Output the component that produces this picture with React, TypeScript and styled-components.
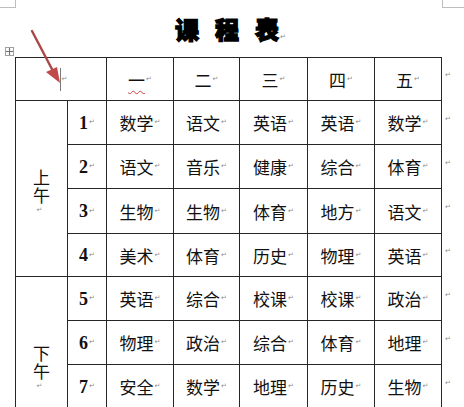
import React from "react";
import styled, { createGlobalStyle } from "styled-components";

const GlobalStyle = createGlobalStyle`
  html, body { margin: 0; padding: 0; background: #fff; overflow: hidden; }
  body { font-family: "Noto Sans CJK SC", sans-serif; color: #111; }
`;

const Page = styled.div`
  position: relative;
  width: 464px;
  height: 407px;
  overflow: hidden;
  display: flex;
  flex-direction: column;
  padding-left: 15px;
  box-sizing: border-box;
`;

const Title = styled.div`
  flex-shrink: 0;
  width: 427px;
  height: 57px;
  display: flex;
  align-items: center;
  justify-content: center;
  gap: 16px;
  padding-left: 4px;
  box-sizing: border-box;
  font-family: "Noto Sans CJK SC", sans-serif;
  font-weight: 900;
  font-size: 24px;
  line-height: 1;
  color: #000;
  -webkit-text-stroke: 1.3px #000;
`;

const TitleChar = styled.span`
  display: inline-flex;
  align-items: baseline;
`;

const Mark = styled.span<{ $size?: number }>`
  font-family: "DejaVu Sans", sans-serif;
  font-weight: normal;
  font-size: ${(p) => p.$size ?? 7}px;
  color: #8c8c8c;
  margin-left: 1px;
  line-height: 1;
  -webkit-text-stroke: 0;
`;

const Body = styled.div`
  flex-shrink: 0;
  display: flex;
  align-items: flex-start;
`;

const ROWS = "42px 43px 43px 44px 42px 43px 43px 43px 43px";

const Grid = styled.div`
  display: grid;
  grid-template-columns: 51px 38px 66px 65px 67px 66px 66px;
  grid-template-rows: ${ROWS};
  gap: 1px;
  padding: 1px;
  background: #262626;
`;

const Cell = styled.div<{ $span?: number; $rowStart?: number; $rowSpan?: number }>`
  background: #fff;
  display: flex;
  align-items: center;
  justify-content: center;
  font-size: 17px;
  line-height: 1;
  color: #111;
  white-space: nowrap;
  ${(p) => (p.$span ? `grid-column: span ${p.$span};` : "")}
  ${(p) =>
    p.$rowStart ? `grid-column: 1; grid-row: ${p.$rowStart} / span ${p.$rowSpan};` : ""}
`;

const Num = styled.span`
  font-family: "Liberation Serif", serif;
  font-weight: bold;
  font-size: 18px;
`;

const Wavy = styled.span`
  text-decoration: underline wavy #d04040;
  text-decoration-thickness: 1px;
  text-underline-offset: 3px;
`;

const Stack = styled.div`
  display: flex;
  flex-direction: column;
  align-items: center;
  font-size: 17px;
  line-height: 18px;
  padding-top: 6px;
`;

const SmallMarkLine = styled.span`
  font-family: "DejaVu Sans", sans-serif;
  font-size: 7px;
  line-height: 9px;
  color: #8c8c8c;
  margin-right: 4px;
  margin-top: 2px;
`;

const Cursor = styled.span`
  display: inline-block;
  width: 1px;
  height: 23px;
  background: #7a7a7a;
  margin-left: 5px;
`;

const EndMarks = styled.div`
  display: grid;
  grid-template-rows: ${ROWS};
  gap: 1px;
  padding: 1px;
  margin-left: 2px;
`;

const EndMark = styled.div`
  display: flex;
  align-items: center;
  padding-bottom: 8px;
  font-family: "DejaVu Sans", sans-serif;
  font-size: 7px;
  color: #8c8c8c;
`;

const CropMark = styled.div<{ $side: "left" | "right" }>`
  position: absolute;
  top: 0;
  ${(p) => (p.$side === "left" ? "left: 0; width: 15px; border-right: 1px solid #bdbdbd;" : "left: 442px; width: 22px; border-left: 1px solid #bdbdbd;")}
  height: 7px;
  border-bottom: 1px solid #bdbdbd;
`;

const MoveHandle = styled.div`
  position: absolute;
  left: 5px;
  top: 47px;
  width: 9px;
  height: 9px;
  border: 1px solid #a0a0a0;
  box-sizing: border-box;
  display: flex;
  align-items: center;
  justify-content: center;
  background: #fff;
`;

const ArrowSvg = styled.svg`
  position: absolute;
  left: 0;
  top: 0;
  pointer-events: none;
`;

const header = ["一", "二", "三", "四", "五"];
const rows = [
  ["数学", "语文", "英语", "英语", "数学"],
  ["语文", "音乐", "健康", "综合", "体育"],
  ["生物", "生物", "体育", "地方", "语文"],
  ["美术", "体育", "历史", "物理", "英语"],
  ["英语", "综合", "校课", "校课", "政治"],
  ["物理", "政治", "综合", "体育", "地理"],
  ["安全", "数学", "地理", "历史", "生物"],
];

export default function App() {
  return (
    <>
      <GlobalStyle />
      <Page>
        <CropMark $side="left" />
        <CropMark $side="right" />
        <Title>
          <TitleChar>课</TitleChar>
          <TitleChar>程</TitleChar>
          <TitleChar>
            表<Mark $size={7}>↵</Mark>
          </TitleChar>
        </Title>
        <Body>
          <Grid>
            <Cell $span={2}>
              <Cursor />
              <Mark>↵</Mark>
            </Cell>
            {header.map((h, i) => (
              <Cell key={h}>
                {i === 0 ? <Wavy>{h}</Wavy> : h}
                <Mark>↵</Mark>
              </Cell>
            ))}
            <Cell $rowStart={2} $rowSpan={4}>
              <Stack>
                <span>上</span>
                <span>午</span>
                <SmallMarkLine>↵</SmallMarkLine>
              </Stack>
            </Cell>
            <Cell $rowStart={6} $rowSpan={4}>
              <Stack>
                <span>下</span>
                <span>午</span>
                <SmallMarkLine>↵</SmallMarkLine>
              </Stack>
            </Cell>
            {rows.map((r, ri) => (
              <React.Fragment key={ri}>
                <Cell>
                  <Num>{ri + 1}</Num>
                  <Mark>↵</Mark>
                </Cell>
                {r.map((s, ci) => (
                  <Cell key={ci}>
                    {s}
                    <Mark>↵</Mark>
                  </Cell>
                ))}
              </React.Fragment>
            ))}
            {Array.from({ length: 6 }).map((_, i) => (
              <Cell key={`last-${i}`} />
            ))}
          </Grid>
          <EndMarks>
            {Array.from({ length: 8 }).map((_, i) => (
              <EndMark key={i}>↵</EndMark>
            ))}
          </EndMarks>
        </Body>
        <MoveHandle>
          <svg width="7" height="7" viewBox="0 0 7 7">
            <path d="M3.5 0.5V6.5M0.5 3.5H6.5" stroke="#555" strokeWidth="0.8" fill="none" />
            <path d="M3.5 0L2.5 1.2H4.5Z M3.5 7L2.5 5.8H4.5Z M0 3.5L1.2 2.5V4.5Z M7 3.5L5.8 2.5V4.5Z" fill="#555" />
          </svg>
        </MoveHandle>
        <ArrowSvg width="464" height="407" viewBox="0 0 464 407">
          <line x1="32" y1="31" x2="54" y2="73" stroke="#a84848" strokeWidth="2.4" strokeLinecap="round" />
          <polygon points="46,72 57,67 60,83" fill="#c04a4a" />
        </ArrowSvg>
      </Page>
    </>
  );
}
